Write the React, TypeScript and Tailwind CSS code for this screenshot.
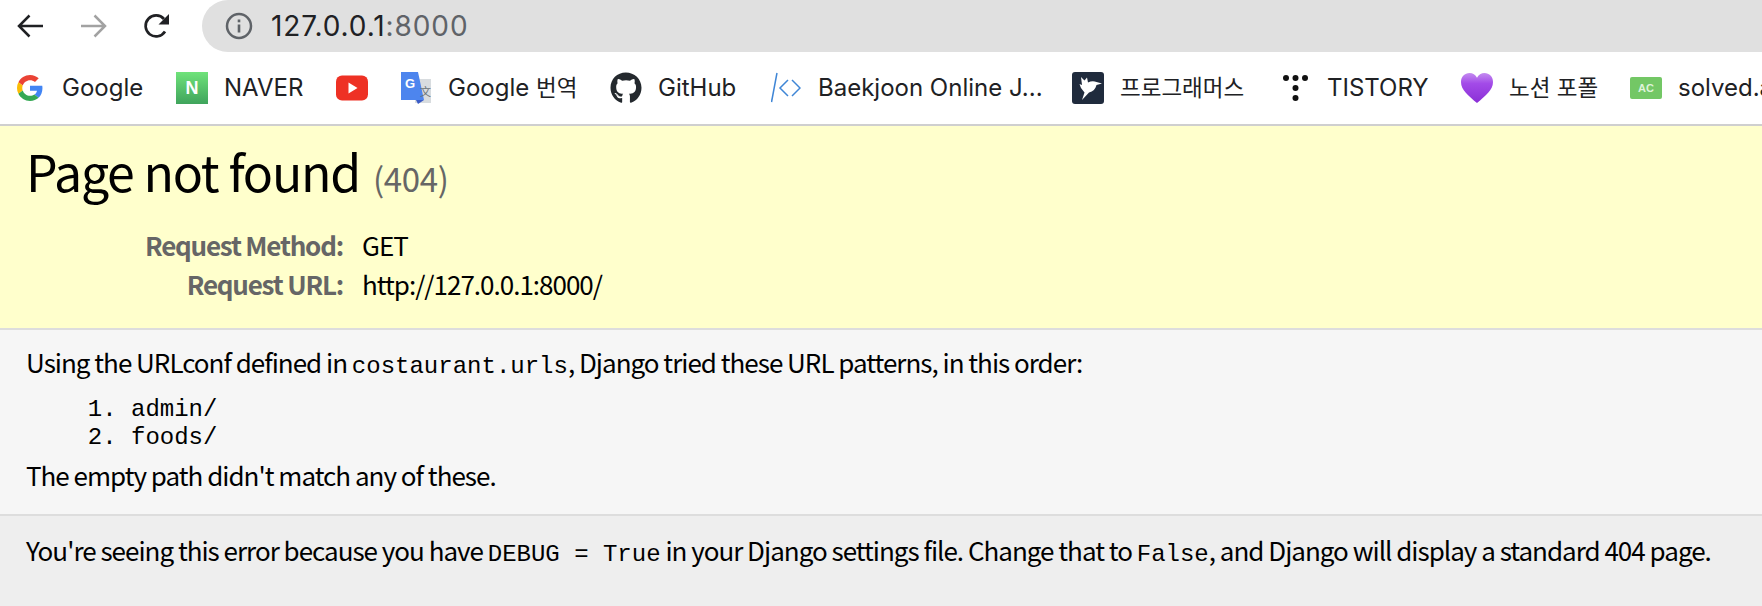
import React from "react";
import { FaGithub } from "react-icons/fa";

const sans = "font-['Noto_Sans_CJK_KR','Noto_Sans',sans-serif]";
const mono = "font-['Liberation_Mono',monospace]";

function GoogleIcon() {
  return (
    <svg className="w-[26px] h-[26px]" viewBox="0 0 48 48" aria-hidden="true">
      <path fill="#EA4335" d="M24 9.5c3.5 0 6.7 1.2 9.200 3.600l6.900-6.900C35.900 2.400 30.500 0 24 0 14.600 0 6.500 5.400 2.600 13.200l8 6.200C12.500 13.700 17.800 9.500 24 9.500z" />
      <path fill="#4285F4" d="M47 24.500c0-1.600-.1-3.100-.4-4.500H24v9h12.900c-.6 3-2.300 5.500-4.800 7.200l7.700 6c4.500-4.200 7.200-10.300 7.200-17.700z" />
      <path fill="#FBBC05" d="M10.500 28.600c-.5-1.400-.8-3-.8-4.600s.3-3.200.8-4.600l-8-6.200C.9 16.500 0 20.100 0 24s.9 7.500 2.600 10.800l7.900-6.200z" />
      <path fill="#34A853" d="M24 48c6.500 0 11.900-2.100 15.900-5.800l-7.700-6c-2.200 1.400-4.900 2.300-8.200 2.300-6.200 0-11.500-4.200-13.400-9.900l-8 6.200C6.500 42.600 14.600 48 24 48z" />
    </svg>
  );
}

function NaverIcon() {
  return (
    <div className="w-8 h-8 flex items-center justify-center bg-gradient-to-b from-[#6fe37a] to-[#3fa45c]">
      <span className="text-white font-black text-[18px] leading-none font-['Liberation_Sans',sans-serif]">N</span>
    </div>
  );
}

function YoutubeIcon() {
  return (
    <svg className="w-8 h-[26px]" viewBox="0 0 32 26" aria-hidden="true">
      <rect width="32" height="25" y="0.5" rx="6" fill="#ee3124" />
      <path d="M12.500 7.500v11l9-5.500z" fill="#fff" />
    </svg>
  );
}

function TranslateIcon() {
  return (
    <svg className="w-[30px] h-8" viewBox="0 0 30 32" aria-hidden="true">
      <rect x="14" y="7" width="16" height="24" fill="#d8dcdf" />
      <path d="M0 0h17l6 28H0z" fill="#4d85ee" />
      <path d="M15 28h8l-6 4z" fill="#3a5bc7" />
      <text x="4" y="16" fontSize="13" fontWeight="700" fill="#fff" fontFamily="Liberation Sans">G</text>
      <text x="19" y="24" fontSize="11" fill="#6a7378" fontFamily="Noto Sans CJK SC">文</text>
    </svg>
  );
}

function BojIcon() {
  return (
    <svg className="w-[30px] h-8" viewBox="0 0 30 32" fill="none" stroke="#3f86d6" strokeWidth="1.500" aria-hidden="true">
      <path d="M6 1L0.500 30" />
      <path d="M17 8l-8 8 8 8" />
      <path d="M21 8l8 8-8 8" />
    </svg>
  );
}

function ProgrammersIcon() {
  return (
    <svg className="w-8 h-8" viewBox="0 0 32 32" aria-hidden="true">
      <rect width="32" height="32" rx="3" fill="#202b3d" />
      <path d="M9 5l3.500 3.500L15 5.500l1 5c3-1.500 6-1.500 8.500-.5L30 11.500l-5.500 1.500c-1 4-3.500 6.500-7.500 7.500L10 28l2.500-7.500-3.500-4.500-1.500-4 2.500 1z" fill="#fff" />
    </svg>
  );
}

function TistoryIcon() {
  return (
    <svg className="w-[27px] h-7" viewBox="0 0 27 28" fill="#111" aria-hidden="true">
      <circle cx="4" cy="4" r="3" />
      <circle cx="13.500" cy="4" r="3" />
      <circle cx="23" cy="4" r="3" />
      <circle cx="13.500" cy="14" r="3" />
      <circle cx="13.500" cy="24" r="3" />
    </svg>
  );
}

function HeartIcon() {
  return (
    <svg className="w-[34px] h-8" viewBox="0 0 34 32" aria-hidden="true">
      <defs>
        <linearGradient id="heart" x1="0" y1="0" x2="0" y2="1">
          <stop offset="0" stopColor="#c48cf0" />
          <stop offset="0.35" stopColor="#a34be8" />
          <stop offset="1" stopColor="#8a2fd6" />
        </linearGradient>
      </defs>
      <path d="M17 32C8 24 0 18 0 9.500 0 4 4 0 9 0c3.500 0 6.500 2 8 5 1.500-3 4.500-5 8-5 5 0 9 4 9 9.500C34 18 26 24 17 32z" fill="url(#heart)" />
    </svg>
  );
}

function AcIcon() {
  return (
    <div className="w-[34px] h-[22px] flex items-center justify-center bg-[#73c765] rounded-[2px]">
      <span className="text-[#dff3da] text-[11px] font-bold leading-none font-['Liberation_Sans',sans-serif]">AC</span>
    </div>
  );
}

const ko = "text-[22.5px]";

const bookmarks = [
  { key: "google", icon: <GoogleIcon />, label: "Google", w: "w-[162px]" },
  { key: "naver", icon: <NaverIcon />, label: "NAVER", w: "w-[160px]" },
  { key: "youtube", icon: <YoutubeIcon />, label: null, w: "w-[64px]" },
  { key: "translate", icon: <TranslateIcon />, label: <>Google <span className={ko}>번역</span></>, w: "w-[210px]" },
  { key: "github", icon: <FaGithub className="w-8 h-8 text-[#24292e]" />, label: "GitHub", w: "w-[160px]" },
  { key: "boj", icon: <BojIcon />, label: "Baekjoon Online J...", w: "w-[302px]" },
  { key: "programmers", icon: <ProgrammersIcon />, label: <span className={ko}>프로그래머스</span>, w: "w-[207px]" },
  { key: "tistory", icon: <TistoryIcon />, label: "TISTORY", w: "w-[182px]" },
  { key: "notion", icon: <HeartIcon />, label: <span className={ko}>노션 포폴</span>, w: "w-[169px]" },
  { key: "solved", icon: <AcIcon />, label: "solved.ac", w: "w-[140px]" },
];

function Bookmark({ icon, label, w }: { icon: React.ReactNode; label: React.ReactNode; w: string }) {
  return (
    <div className={`${w} shrink-0 flex items-center gap-[16px]`}>
      <div className="w-8 h-8 flex items-center justify-center shrink-0">{icon}</div>
      {label && <span className="whitespace-nowrap">{label}</span>}
    </div>
  );
}

export default function App() {
  return (
    <div className="w-[1762px] h-[606px] overflow-hidden flex flex-col bg-white">
      {/* Browser toolbar */}
      <div className="h-[52px] flex items-center pl-[16px] shrink-0">
        <div className="flex items-center gap-[36px] w-[186px] shrink-0">
          <svg className="w-[28px] h-[28px]" viewBox="0 0 28 28" fill="none" stroke="#202124" strokeWidth="2.500" aria-hidden="true">
            <path d="M27 14H3M13.500 3.500L3 14l10.500 10.500" />
          </svg>
          <svg className="w-[28px] h-[28px]" viewBox="0 0 28 28" fill="none" stroke="#a2a2a2" strokeWidth="2.500" aria-hidden="true">
            <path d="M1 14h24M14.500 3.500L25 14 14.500 24.500" />
          </svg>
          <svg className="w-[28px] h-[28px] -ml-[2px]" viewBox="0 0 28 28" aria-hidden="true">
            <path d="M23 19.500A10.500 10.500 0 1 1 22 7" fill="none" stroke="#202124" strokeWidth="2.700" />
            <path d="M27 2v10.500H16.500z" fill="#202124" />
          </svg>
        </div>
        <div className="flex-1 h-[52px] bg-[#e0e0e0] rounded-l-[30px] flex items-center pl-[23px] gap-[18px]">
          <svg className="w-[28px] h-[28px]" viewBox="0 0 28 28" fill="none" aria-hidden="true">
            <circle cx="14" cy="14" r="12" stroke="#5f6368" strokeWidth="2.500" />
            <rect x="12.700" y="12.500" width="2.600" height="8" fill="#5f6368" />
            <rect x="12.700" y="7.500" width="2.600" height="2.800" fill="#5f6368" />
          </svg>
          <span className="text-[28px] tracking-[0.9px] leading-none text-[#202124] font-['Inter',sans-serif]">
            127.0.0.1<span className="text-[#5f6368]">:8000</span>
          </span>
        </div>
      </div>

      {/* Bookmarks */}
      <div className="h-[72px] shrink-0 flex items-center pl-[14px] overflow-hidden text-[24px] text-[#202124] font-['Inter','Noto_Sans_CJK_KR',sans-serif] border-b-2 border-[#cfcfcf] box-content">
        {bookmarks.map((b) => (
          <Bookmark key={b.key} icon={b.icon} label={b.label} w={b.w} />
        ))}
      </div>

      {/* Django 404 page */}
      <div className={`flex-1 flex flex-col text-black ${sans}`}>
        <div className="h-[193px] shrink-0 bg-[#ffffcc] border-b-2 border-[#dddddd] box-content pl-[26px] pt-[9px]">
          <h1 className="text-[50px] tracking-[-1.25px] leading-[70px] font-normal">
            Page not found <span className="ml-[3px] text-[33px] tracking-[-0.3px] text-[#666666]">(404)</span>
          </h1>
          <table className="mt-[12px] text-[26px] tracking-[-1px] leading-[39px]">
            <tbody>
              <tr>
                <th className="w-[336px] pr-[19px] text-right font-semibold tracking-[-1.2px] text-[#666666]">Request Method:</th>
                <td>GET</td>
              </tr>
              <tr>
                <th className="w-[336px] pr-[19px] text-right font-semibold tracking-[-1.2px] text-[#666666]">Request URL:</th>
                <td>http://127.0.0.1:8000/</td>
              </tr>
            </tbody>
          </table>
        </div>

        <div className="h-[169px] shrink-0 bg-[#f6f6f6] border-b-2 border-[#dddddd] box-content pl-[26px] pt-[15px] text-[26px] tracking-[-1px]">
          <p className="leading-[34px]">
            Using the URLconf defined in <code className={`${mono} text-[24px] tracking-normal`}>costaurant.urls</code>, Django tried these URL patterns, in this order:
          </p>
          <ol className={`${mono} mt-[12px] pl-[105px] text-[24px] tracking-normal leading-[28px] list-decimal`}>
            <li>admin/</li>
            <li>foods/</li>
          </ol>
          <p className="mt-[6px] leading-[34px]">The empty path didn't match any of these.</p>
        </div>

        <div className="flex-1 bg-[#eeeeee] pl-[26px] pt-[17px] text-[26px] tracking-[-1px]">
          <p className="leading-[34px] whitespace-nowrap">
            You're seeing this error because you have <code className={`${mono} text-[24px] tracking-normal`}>DEBUG = True</code> in your Django settings file. Change that to <code className={`${mono} text-[24px] tracking-normal`}>False</code>, and Django will display a standard 404 page.
          </p>
        </div>
      </div>
    </div>
  );
}
